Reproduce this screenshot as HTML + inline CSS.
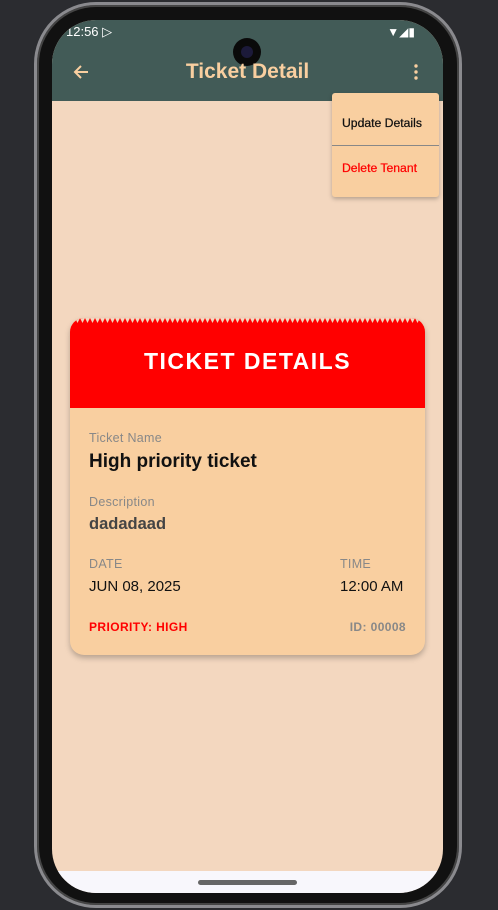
<!DOCTYPE html>
<html><head><meta charset="utf-8">
<style>
*{margin:0;padding:0;box-sizing:border-box}
body{width:498px;height:910px;background:#2b2c30;position:relative;overflow:hidden;font-family:"Liberation Sans",sans-serif}
.body{position:absolute;left:34px;top:2px;width:428px;height:906px;border-radius:62px;background:#111;border:3px solid #8a8a8e;box-shadow:inset 0 0 0 2px #444}
.screen{position:absolute;left:52px;top:20px;width:391px;height:873px;border-radius:44px;overflow:hidden;background:#f3d7bf}
.appbar{position:absolute;left:0;top:0;width:391px;height:81px;background:#425b57}
.status{position:absolute;left:14px;top:4px;color:#fff;font-size:13px}
.cam{position:absolute;left:181px;top:18px;width:28px;height:28px;border-radius:50%;background:#0a0a0a}
.cam:after{content:"";position:absolute;left:8px;top:8px;width:12px;height:12px;border-radius:50%;background:#1c1a3a}
.title{position:absolute;left:0;width:391px;top:40px;text-align:center;color:#f9cfa0;font-weight:bold;font-size:21px}
.menu{position:absolute;left:280px;top:73px;width:107px;height:104px;background:#f9cfa0;border-radius:3px;box-shadow:0 2px 4px rgba(0,0,0,.25)}
.menu .it{position:absolute;left:10px;font-size:12.2px;-webkit-text-stroke:.25px currentColor}
.menu .sep{position:absolute;left:0;top:52px;width:107px;height:1px;background:#888}
.card{position:absolute;left:18px;top:298px;width:355px;height:337px;background:#f9cfa0;border-radius:14px;box-shadow:0 3px 6px rgba(0,0,0,.25);overflow:hidden}
.head{position:absolute;left:0;top:0;width:355px;height:90px;background:#f00}
.head span{position:absolute;left:0;width:355px;top:30px;text-align:center;color:#fff;font-weight:bold;font-size:23px;letter-spacing:1.5px}
.l{position:absolute;color:#888;font-size:12.5px;letter-spacing:.3px}
.v{position:absolute;color:#111}
.nav{position:absolute;left:0;top:851px;width:391px;height:22px;background:#f8f7fc}
.pill{position:absolute;left:146px;top:9px;width:99px;height:5px;border-radius:3px;background:#666}
</style></head><body>
<div class="body"></div>
<div class="screen">
<div class="appbar">
<div class="status">12:56 ▷</div>
<div style="position:absolute;right:28px;top:5px;color:#fff;font-size:12px">▼◢▮</div>
<div class="cam"></div>
<svg style="position:absolute;left:20px;top:43px" width="18" height="18" viewBox="0 0 18 18"><path d="M16 9H3M9 3L3 9l6 6" stroke="#f9cfa0" stroke-width="2" fill="none"/></svg>
<div class="title">Ticket Detail</div>
<svg style="position:absolute;left:362px;top:44px" width="4" height="16"><circle cx="2" cy="2" r="1.7" fill="#f9cfa0"/><circle cx="2" cy="8" r="1.7" fill="#f9cfa0"/><circle cx="2" cy="14" r="1.7" fill="#f9cfa0"/></svg>
</div>
<div class="menu"><div class="it" style="top:23px;color:#111">Update Details</div><div class="sep"></div><div class="it" style="top:68px;color:#f00">Delete Tenant</div></div>
<div class="card">
<div class="head"><span>TICKET DETAILS</span></div>
<svg style="position:absolute;left:0;top:0" width="355" height="6"><defs><pattern id="z" width="5" height="6" patternUnits="userSpaceOnUse"><path d="M0 0L2.5 5L5 0Z" fill="#f3d7bf"/></pattern></defs><rect width="355" height="6" fill="url(#z)"/></svg>
<div class="l" style="left:19px;top:113px">Ticket Name</div>
<div class="v" style="left:19px;top:133px;font-size:19px;font-weight:bold">High priority ticket</div>
<div class="l" style="left:19px;top:177px">Description</div>
<div class="v" style="left:19px;top:197px;font-size:16.5px;font-weight:bold;color:#444">dadadaad</div>
<div class="l" style="left:19px;top:239px">DATE</div>
<div class="l" style="left:270px;top:239px">TIME</div>
<div class="v" style="left:19px;top:260px;font-size:15px">JUN 08, 2025</div>
<div class="v" style="left:270px;top:260px;font-size:15px">12:00 AM</div>
<div style="position:absolute;left:19px;top:302px;color:#f00;font-size:12px;font-weight:bold;letter-spacing:.4px">PRIORITY: HIGH</div>
<div style="position:absolute;right:19px;top:302px;color:#888;font-size:12px;font-weight:bold;letter-spacing:.4px">ID: 00008</div>
</div>
<div class="nav"><div class="pill"></div></div>
</div>
</body></html>
